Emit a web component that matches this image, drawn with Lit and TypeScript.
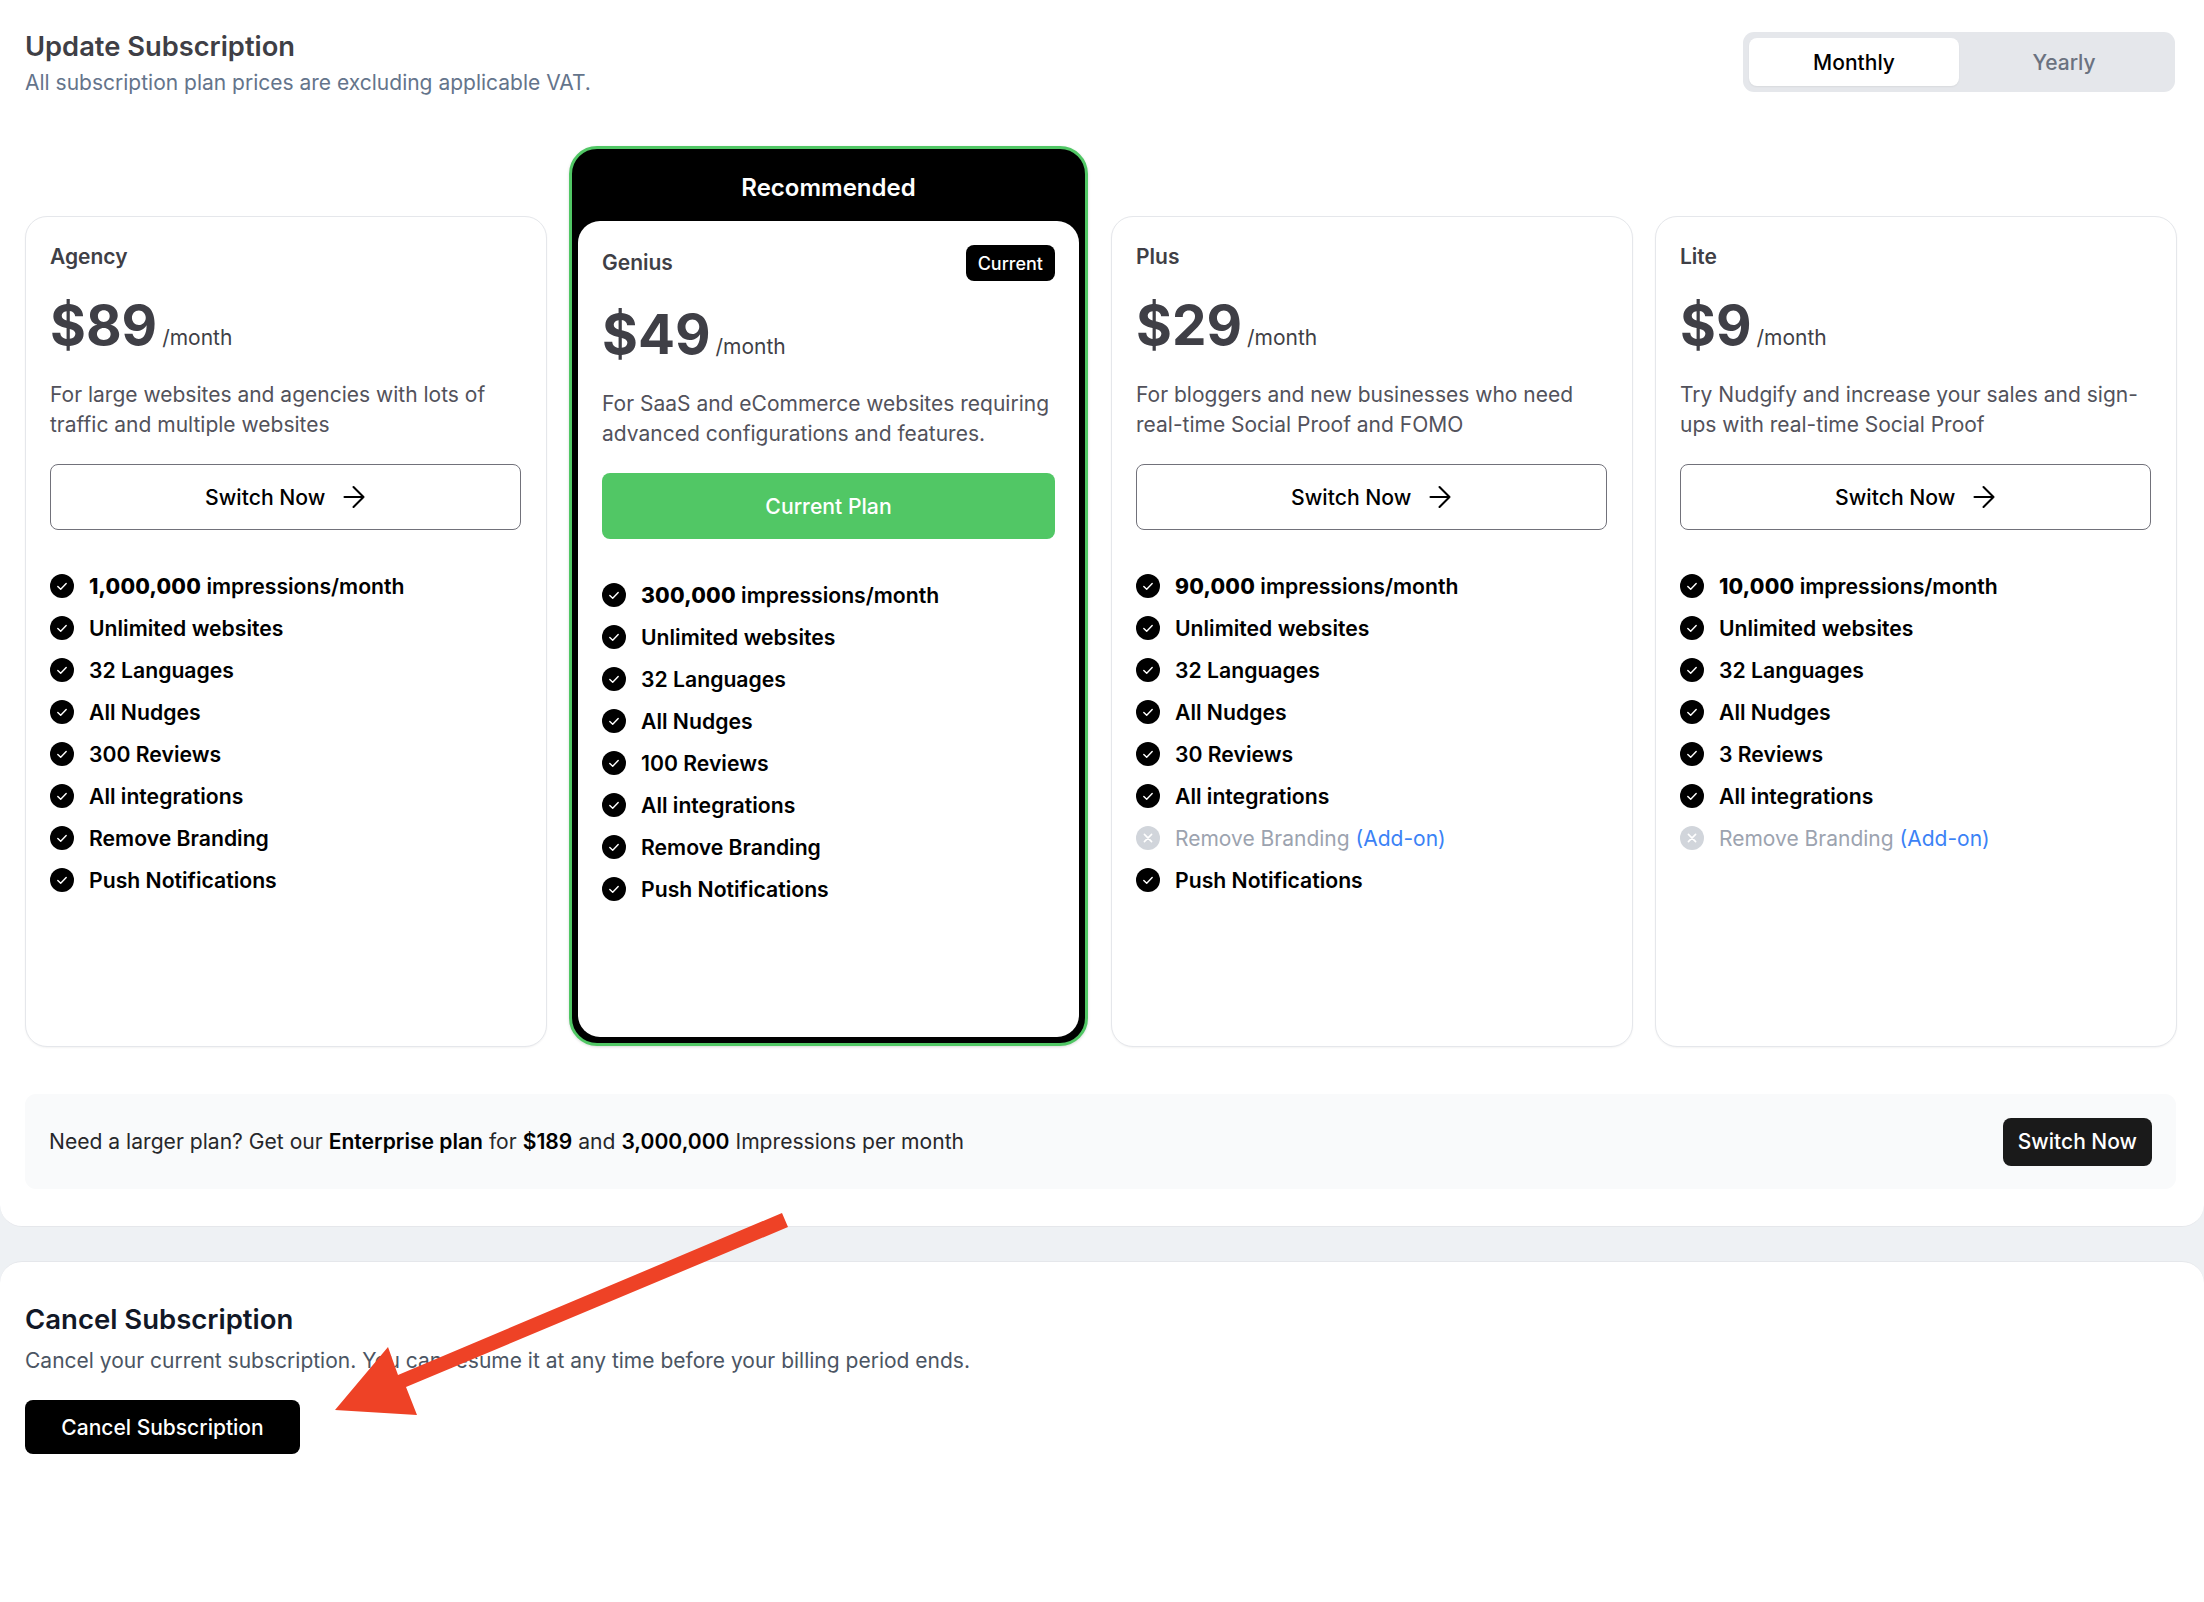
import { LitElement, html, css, nothing } from 'lit';
import { customElement } from 'lit/decorators.js';

interface Feature {
  text: string;
  strong?: string;
  off?: boolean;
}

interface Plan {
  name: string;
  price: string;
  desc: string;
  features: Feature[];
  current?: boolean;
}

const feats = (impressions: string, reviews: string, branding = true, push = true): Feature[] => {
  const list: Feature[] = [
    { strong: impressions, text: ' impressions/month' },
    { text: 'Unlimited websites' },
    { text: '32 Languages' },
    { text: 'All Nudges' },
    { text: `${reviews} Reviews` },
    { text: 'All integrations' },
    { text: 'Remove Branding', off: !branding },
  ];
  if (push) list.push({ text: 'Push Notifications' });
  return list;
};

const plans: Plan[] = [
  {
    name: 'Agency',
    price: '$89',
    desc: 'For large websites and agencies with lots of traffic and multiple websites',
    features: feats('1,000,000', '300'),
  },
  {
    name: 'Genius',
    price: '$49',
    desc: 'For SaaS and eCommerce websites requiring advanced configurations and features.',
    features: feats('300,000', '100'),
    current: true,
  },
  {
    name: 'Plus',
    price: '$29',
    desc: 'For bloggers and new businesses who need real-time Social Proof and FOMO',
    features: feats('90,000', '30', false),
  },
  {
    name: 'Lite',
    price: '$9',
    desc: 'Try Nudgify and increase your sales and sign-ups with real-time Social Proof',
    features: feats('10,000', '3', false, false),
  },
];

const checkIcon = html`<svg class="ico" viewBox="0 0 24 24">
  <circle cx="12" cy="12" r="12" fill="#000"></circle>
  <path d="M7.8 12.4l2.9 2.9 5.5-5.9" fill="none" stroke="#fff" stroke-width="1.4" stroke-linecap="round" stroke-linejoin="round"></path>
</svg>`;

const crossIcon = html`<svg class="ico" viewBox="0 0 24 24">
  <circle cx="12" cy="12" r="12" fill="#d1d5db"></circle>
  <path d="M8.4 8.4l7.2 7.2M15.6 8.4l-7.2 7.2" fill="none" stroke="#fff" stroke-width="1.6" stroke-linecap="round"></path>
</svg>`;

const arrowIcon = html`<svg class="arrow-ico" viewBox="0 0 24 24">
  <path d="M2.5 12h19M11.5 2l10 10-10 10" fill="none" stroke="#000" stroke-width="2.1" stroke-linecap="round" stroke-linejoin="round"></path>
</svg>`;

@customElement('app-root')
export class AppRoot extends LitElement {
  static styles = css`
    :host {
      display: block;
      position: relative;
      height: 1602px;
      overflow: hidden;
      background: #eef1f4;
      font-family: Inter, 'Liberation Sans', sans-serif;
      color: #000;
    }
    * {
      box-sizing: border-box;
    }
    .section {
      background: #fff;
      border: 1.4px solid #e5e7eb;
      border-width: 0 0 1.4px 0;
      border-radius: 0 0 22px 22px;
      padding: 32px 28px 37px 25px;
    }
    .header {
      display: flex;
      justify-content: space-between;
      height: 60px;
    }
    .title {
      padding-top: 1px;
      font-size: 27.3px;
      line-height: 28px;
      font-weight: 600;
      color: #3f3f46;
    }
    .subtitle {
      margin-top: 8px;
      font-size: 21px;
      line-height: 28px;
      color: #64748b;
    }
    .toggle {
      display: flex;
      width: 432px;
      margin-right: 1px;
      padding: 6px;
      background: #e5e7eb;
      border-radius: 11px;
    }
    .tab {
      flex: 1;
      display: flex;
      align-items: center;
      justify-content: center;
      font-size: 21px;
      font-weight: 500;
      color: #6b7280;
      border-radius: 8px;
    }
    .tab.on {
      background: #fff;
      color: #000;
      box-shadow: 0 1px 2px rgba(0, 0, 0, 0.06);
    }
    .grid {
      display: grid;
      grid-template-columns: 522px 520px 522px 522px;
      gap: 22px;
      align-items: end;
      margin-top: 54px;
    }
    .card {
      height: 831px;
      padding: 25.5px 25px 24px 24px;
      background: #fff;
      border: 1.4px solid #e5e7eb;
      border-radius: 22px;
      box-shadow: 0 1px 2px rgba(0, 0, 0, 0.05);
    }
    .featured {
      width: 519px;
      height: 900px;
      margin-bottom: 1px;
      display: flex;
      flex-direction: column;
      background: #000;
      border: 3px solid #51c765;
      border-radius: 28px;
      box-shadow: 0 1px 3px rgba(0, 0, 0, 0.15);
    }
    .ribbon {
      height: 72px;
      flex: none;
      display: flex;
      align-items: center;
      justify-content: center;
      padding-top: 4px;
      font-size: 24px;
      font-weight: 600;
      color: #fff;
    }
    .featured .card {
      flex: 1;
      height: auto;
      margin: 0 6px 6px;
      border: 0;
      box-shadow: none;
      padding: 24px;
    }
    .top {
      display: flex;
      align-items: center;
      justify-content: space-between;
      min-height: 28px;
    }
    .featured .top {
      min-height: 36px;
    }
    .name {
      font-size: 21px;
      line-height: 28px;
      font-weight: 600;
      color: #3f3f46;
    }
    .badge {
      display: flex;
      align-items: center;
      height: 36px;
      padding: 0 12px;
      border-radius: 8px;
      background: #000;
      color: #fff;
      font-size: 18px;
      font-weight: 500;
    }
    .price {
      display: flex;
      align-items: baseline;
      gap: 5px;
      margin-top: 20.6px;
      height: 68px;
      line-height: 68px;
      color: #3f3f46;
    }
    .featured .price {
      margin-top: 19px;
    }
    .amount {
      font-size: 54.8px;
      font-weight: 700;
    }
    .per {
      font-size: 21px;
    }
    .desc {
      margin: 21.4px 0 0;
      height: 59px;
      font-size: 21px;
      line-height: 29.5px;
      color: #52525b;
    }
    .featured .desc {
      margin-top: 21px;
    }
    .btn {
      display: flex;
      align-items: center;
      justify-content: center;
      gap: 16.5px;
      height: 66px;
      margin-top: 25px;
      background: #fff;
      border: 1.4px solid #71717a;
      border-radius: 8px;
      font-size: 21.2px;
      font-weight: 500;
      color: #000;
    }
    .btn.green {
      background: #51c765;
      border: 0;
      color: #fff;
    }
    .arrow-ico {
      width: 24px;
      height: 24px;
    }
    .feats {
      list-style: none;
      margin: 35px 0 0;
      padding: 0;
    }
    .feats li {
      display: flex;
      align-items: center;
      gap: 15px;
      height: 42px;
      font-size: 21.2px;
      font-weight: 600;
    }
    .feats li b {
      font-weight: 800;
      letter-spacing: 0.2px;
    }
    .feats li.off {
      font-size: 21px;
      font-weight: 400;
      color: #9ca3af;
    }
    .ico {
      width: 24px;
      height: 24px;
      flex: none;
    }
    .addon {
      color: #3b82f6;
    }
    .banner {
      display: flex;
      align-items: center;
      justify-content: space-between;
      height: 95px;
      margin-top: 47px;
      padding: 0 24px;
      border-radius: 11px;
      background: #f9fafb;
      font-size: 21.1px;
      color: #27272a;
    }
    .banner b {
      font-weight: 600;
      color: #000;
    }
    .dark-btn {
      display: flex;
      align-items: center;
      height: 48px;
      padding: 0 15px;
      border-radius: 8px;
      background: #1a1a1a;
      color: #fff;
      font-size: 21px;
      font-weight: 500;
    }
    .cancel {
      height: 341px;
      margin-top: 34px;
      padding: 41px 25px 0;
      background: #fff;
      border-top: 1.4px solid #e5e7eb;
      border-radius: 22px 22px 0 0;
    }
    .cancel h2 {
      margin: 0;
      font-size: 27.5px;
      line-height: 32px;
      font-weight: 600;
      color: #111827;
    }
    .cancel p {
      margin: 12px 0 0;
      font-size: 21px;
      line-height: 28px;
      color: #4b5563;
    }
    .cancel-btn {
      display: flex;
      align-items: center;
      justify-content: center;
      width: 275px;
      height: 54px;
      margin-top: 25px;
      border-radius: 8px;
      background: #000;
      color: #fff;
      font-size: 21px;
      font-weight: 500;
    }
    .annotation {
      position: absolute;
      inset: 0;
      width: 2204px;
      height: 1602px;
      pointer-events: none;
    }
  `;

  renderCard(plan: Plan) {
    return html`
      <div class="card">
        <div class="top">
          <span class="name">${plan.name}</span>
          ${plan.current ? html`<span class="badge">Current</span>` : nothing}
        </div>
        <div class="price">
          <span class="amount">${plan.price}</span>
          <span class="per">/month</span>
        </div>
        <p class="desc">${plan.desc}</p>
        ${plan.current
          ? html`<div class="btn green">Current Plan</div>`
          : html`<div class="btn">Switch Now ${arrowIcon}</div>`}
        <ul class="feats">
          ${plan.features.map(
            (f) => html`<li class=${f.off ? 'off' : ''}>
              ${f.off ? crossIcon : checkIcon}
              <span>${f.strong ? html`<b>${f.strong}</b>` : nothing}${f.text}${f.off ? html` <span class="addon">(Add-on)</span>` : nothing}</span>
            </li>`
          )}
        </ul>
      </div>
    `;
  }

  render() {
    return html`
      <section class="section">
        <div class="header">
          <div>
            <div class="title">Update Subscription</div>
            <div class="subtitle">All subscription plan prices are excluding applicable VAT.</div>
          </div>
          <div class="toggle">
            <div class="tab on">Monthly</div>
            <div class="tab">Yearly</div>
          </div>
        </div>
        <div class="grid">
          ${plans.map((plan) =>
            plan.current
              ? html`<div class="featured">
                  <div class="ribbon">Recommended</div>
                  ${this.renderCard(plan)}
                </div>`
              : this.renderCard(plan)
          )}
        </div>
        <div class="banner">
          <span>Need a larger plan? Get our <b>Enterprise plan</b> for <b>$189</b> and <b>3,000,000</b> Impressions per month</span>
          <div class="dark-btn">Switch Now</div>
        </div>
      </section>
      <section class="cancel">
        <h2>Cancel Subscription</h2>
        <p>Cancel your current subscription. You can resume it at any time before your billing period ends.</p>
        <div class="cancel-btn">Cancel Subscription</div>
      </section>
      <svg class="annotation" viewBox="0 0 2204 1602">
        <polygon fill="#ee4226" points="782,1213 788,1227 406,1387 417,1415 335,1410 388,1347 398,1375"></polygon>
      </svg>
    `;
  }
}
